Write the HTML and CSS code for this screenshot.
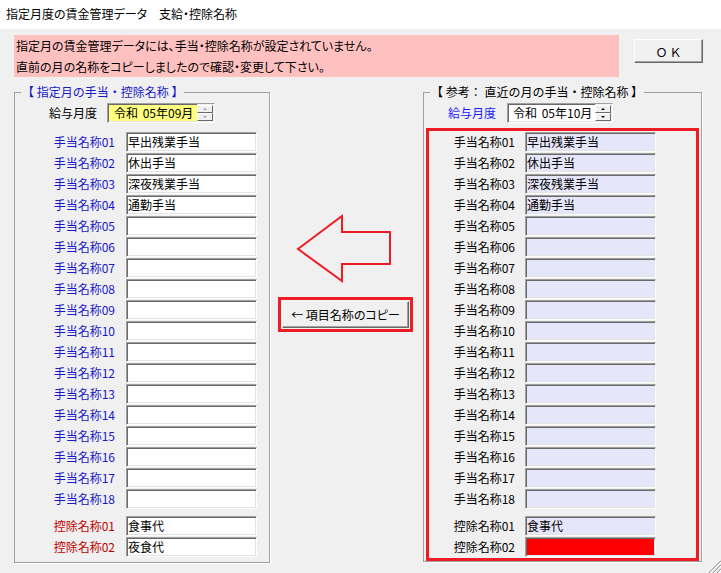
FILE: index.html
```html
<!DOCTYPE html>
<html lang="ja">
<head>
<meta charset="utf-8">
<title>支給・控除名称</title>
<link rel="stylesheet" href="styles.css">
</head>
<body>
<div class="window">
  <div class="titlebar">指定月度の賃金管理データ　支給・控除名称</div>
  <div class="client">
    <div class="toprow">
      <div class="msg">指定月の賃金管理データには、手当・控除名称が設定されていません。<br>直前の月の名称をコピーしましたので確認・変更して下さい。</div>
      <button class="btn ok">ＯＫ</button>
    </div>
    <div class="mainrow">
      <fieldset class="group left">
        <legend>【 指定月の手当・控除名称 】</legend>
        <div class="month-row">
          <span class="mlabel">給与月度</span>
          <div class="spin yellow">
            <span class="spin-text">令和 05年09月</span>
            <span class="spin-btns disabled"><span class="sb"><i class="up"></i></span><span class="sb"><i class="down"></i></span></span>
          </div>
        </div>
        <div class="grid">
          <span class="lbl">手当名称01</span><div class="field">早出残業手当</div>
          <span class="lbl">手当名称02</span><div class="field">休出手当</div>
          <span class="lbl">手当名称03</span><div class="field">深夜残業手当</div>
          <span class="lbl">手当名称04</span><div class="field">通勤手当</div>
          <span class="lbl">手当名称05</span><div class="field"></div>
          <span class="lbl">手当名称06</span><div class="field"></div>
          <span class="lbl">手当名称07</span><div class="field"></div>
          <span class="lbl">手当名称08</span><div class="field"></div>
          <span class="lbl">手当名称09</span><div class="field"></div>
          <span class="lbl">手当名称10</span><div class="field"></div>
          <span class="lbl">手当名称11</span><div class="field"></div>
          <span class="lbl">手当名称12</span><div class="field"></div>
          <span class="lbl">手当名称13</span><div class="field"></div>
          <span class="lbl">手当名称14</span><div class="field"></div>
          <span class="lbl">手当名称15</span><div class="field"></div>
          <span class="lbl">手当名称16</span><div class="field"></div>
          <span class="lbl">手当名称17</span><div class="field"></div>
          <span class="lbl">手当名称18</span><div class="field"></div>
        </div>
        <div class="grid deduct">
          <span class="lbl red">控除名称01</span><div class="field">食事代</div>
          <span class="lbl red">控除名称02</span><div class="field">夜食代</div>
        </div>
      </fieldset>

      <div class="middle">
        <svg class="arrow" width="100" height="70" viewBox="0 0 100 70">
          <polygon points="4,36 48,3 48,19 96,19 96,51 48,51 48,68" fill="none" stroke="#ee1c25" stroke-width="2" stroke-linejoin="miter"/>
        </svg>
        <div class="copyframe"><button class="btn copybtn">← 項目名称のコピー</button></div>
      </div>

      <fieldset class="group right">
        <legend>【 参考： 直近の月の手当・控除名称 】</legend>
        <div class="month-row">
          <span class="mlabel blue">給与月度</span>
          <div class="spin">
            <span class="spin-text">令和 05年10月</span>
            <span class="spin-btns"><span class="sb"><i class="up"></i></span><span class="sb"><i class="down"></i></span></span>
          </div>
        </div>
        <div class="redframe">
          <div class="grid">
            <span class="lbl">手当名称01</span><div class="field">早出残業手当</div>
            <span class="lbl">手当名称02</span><div class="field">休出手当</div>
            <span class="lbl">手当名称03</span><div class="field">深夜残業手当</div>
            <span class="lbl">手当名称04</span><div class="field">通勤手当</div>
            <span class="lbl">手当名称05</span><div class="field"></div>
            <span class="lbl">手当名称06</span><div class="field"></div>
            <span class="lbl">手当名称07</span><div class="field"></div>
            <span class="lbl">手当名称08</span><div class="field"></div>
            <span class="lbl">手当名称09</span><div class="field"></div>
            <span class="lbl">手当名称10</span><div class="field"></div>
            <span class="lbl">手当名称11</span><div class="field"></div>
            <span class="lbl">手当名称12</span><div class="field"></div>
            <span class="lbl">手当名称13</span><div class="field"></div>
            <span class="lbl">手当名称14</span><div class="field"></div>
            <span class="lbl">手当名称15</span><div class="field"></div>
            <span class="lbl">手当名称16</span><div class="field"></div>
            <span class="lbl">手当名称17</span><div class="field"></div>
            <span class="lbl">手当名称18</span><div class="field"></div>
          </div>
          <div class="grid deduct">
            <span class="lbl">控除名称01</span><div class="field">食事代</div>
            <span class="lbl">控除名称02</span><div class="field alert"></div>
          </div>
        </div>
      </fieldset>
    </div>

    <svg class="grip" width="16" height="16" viewBox="0 0 16 16">
      <path d="M4 16 L16 4 M8 16 L16 8 M12 16 L16 12" stroke="#a0a0a0" stroke-width="1.2"/>
      <path d="M5 16 L16 5 M9 16 L16 9 M13 16 L16 13" stroke="#ffffff" stroke-width="1"/>
    </svg>
  </div>
</div>
</body>
</html>
```

FILE: styles.css
```css
html, body {
  margin: 0;
  padding: 0;
}
body {
  width: 721px;
  height: 573px;
  overflow: hidden;
  font-family: "Noto Sans CJK JP", "Noto Sans", sans-serif;
  font-size: 12px;
  color: #000;
  background: #f0f0f0;
}
.window {
  display: flex;
  flex-direction: column;
  height: 573px;
}
.titlebar {
  height: 29px;
  line-height: 28px;
  background: #fff;
  padding-left: 6px;
  font-size: 12px;
  font-feature-settings: "palt";
}
.client {
  position: relative;
  flex: 1;
  background: #f0f0f0;
}

/* top message row */
.toprow {
  display: flex;
  align-items: flex-start;
  padding: 6px 0 0 14px;
}
.msg {
  width: 605px;
  height: 42px;
  box-sizing: border-box;
  background: #ffc0c0;
  padding-left: 2px;
  line-height: 21px;
  white-space: nowrap;
  font-feature-settings: "palt";
}
.btn {
  font: inherit;
  color: #000;
  padding: 0;
  margin: 0;
  background: #f0f0f0;
  border-top: 1px solid #fff;
  border-left: 1px solid #fff;
  border-right: 1px solid #696969;
  border-bottom: 1px solid #696969;
  box-shadow: inset -1px -1px 0 #a0a0a0;
  box-sizing: border-box;
  cursor: default;
}
.ok {
  margin-left: 15px;
  margin-top: 4px;
  width: 69px;
  height: 24px;
  letter-spacing: 2px;
  padding-left: 2px;
}

/* main row */
.mainrow {
  display: flex;
  align-items: flex-start;
  margin-top: 7px;
  padding-left: 14px;
}
.group {
  margin: 0;
  padding: 0;
  min-width: 0;
  border: 1px solid #a0a0a0;
  box-shadow: 1px 1px 0 #fff;
  box-sizing: border-box;
}
.group legend {
  margin-left: 6px;
  padding: 0 1px;
  line-height: 16px;
  height: 16px;
  white-space: nowrap;
}
.group.left {
  width: 256px;
  padding-bottom: 5px;
}
.group.left legend {
  color: #1818c8;
}
.group.right {
  width: 279px;
}

.month-row {
  display: flex;
  align-items: center;
  padding-top: 3px;
}
.left .month-row {
  padding-left: 34px;
  gap: 10px;
}
.right .month-row {
  padding-left: 24px;
  gap: 11px;
}
.mlabel {
  line-height: 20px;
}
.mlabel.blue {
  color: #1a1aff;
}

.spin {
  display: flex;
  height: 20px;
  width: 106px;
  box-sizing: border-box;
  background: #fff;
  border-top: 1px solid #a0a0a0;
  border-left: 1px solid #a0a0a0;
  border-right: 1px solid #fff;
  border-bottom: 1px solid #fff;
  box-shadow: inset 1px 1px 0 #696969, inset -1px -1px 0 #e3e3e3;
}
.left .spin {
  width: 108px;
}
.spin.yellow {
  background: #ffff80;
}
.spin-text {
  flex: 1;
  line-height: 18px;
  padding-left: 6px;
  white-space: nowrap;
  word-spacing: 2px;
}
.right .spin-text {
  padding-left: 5px;
}
.spin-btns {
  display: flex;
  flex-direction: column;
  width: 16px;
  padding: 1px 1px 1px 0;
  background: #f0f0f0;
}
.sb {
  flex: 1;
  display: flex;
  align-items: center;
  justify-content: center;
  background: #f0f0f0;
  border-top: 1px solid #fff;
  border-left: 1px solid #fff;
  border-right: 1px solid #696969;
  border-bottom: 1px solid #696969;
  box-sizing: border-box;
}
.sb i {
  display: block;
  width: 0;
  height: 0;
  border-left: 2px solid transparent;
  border-right: 2px solid transparent;
}
.sb i.up {
  border-bottom: 2px solid #000;
}
.sb i.down {
  border-top: 2px solid #000;
}
.disabled .sb i.up {
  border-bottom-color: #a0a0a0;
}
.disabled .sb i.down {
  border-top-color: #a0a0a0;
}

/* name grids */
.grid {
  display: grid;
  row-gap: 1px;
  align-items: center;
}
.left .grid {
  grid-template-columns: 100px 131px;
  column-gap: 11px;
  margin-top: 9px;
}
.left .grid.deduct {
  margin-top: 7px;
}
.lbl {
  text-align: right;
  line-height: 20px;
  white-space: nowrap;
  color: #000;
}
.left .lbl {
  color: #1818c8;
}
.left .lbl.red {
  color: #c00000;
}
.field {
  height: 20px;
  box-sizing: border-box;
  background: #fff;
  border-top: 1px solid #a0a0a0;
  border-left: 1px solid #a0a0a0;
  border-right: 1px solid #fff;
  border-bottom: 1px solid #fff;
  box-shadow: inset 1px 1px 0 #696969, inset -1px -1px 0 #e3e3e3;
  line-height: 18px;
  padding-left: 1px;
  white-space: nowrap;
  overflow: hidden;
}
.right .field {
  background: #e6e6fa;
}
.right .field.alert {
  background: #ff0000;
}

.redframe {
  margin: 5px 2px 0 2px;
  border: 3px solid #ee1c25;
  padding: 1px 0 1px 0;
}
.right .grid {
  grid-template-columns: 86px 131px;
  column-gap: 10px;
}
.right .grid.deduct {
  margin-top: 7px;
}

/* middle column */
.middle {
  width: 153px;
  display: flex;
  flex-direction: column;
  align-items: flex-start;
}
.arrow {
  display: block;
  margin-top: 129px;
  margin-left: 24px;
}
.copyframe {
  margin-top: 14px;
  margin-left: 8px;
  width: 135px;
  height: 35px;
  box-sizing: border-box;
  border: 3px solid #ee1c25;
  padding: 1px;
  display: flex;
}
.copybtn {
  flex: 1;
  height: 100%;
  white-space: nowrap;
  font-feature-settings: "palt";
}

.grip {
  position: absolute;
  right: 0;
  bottom: 0;
}
```
